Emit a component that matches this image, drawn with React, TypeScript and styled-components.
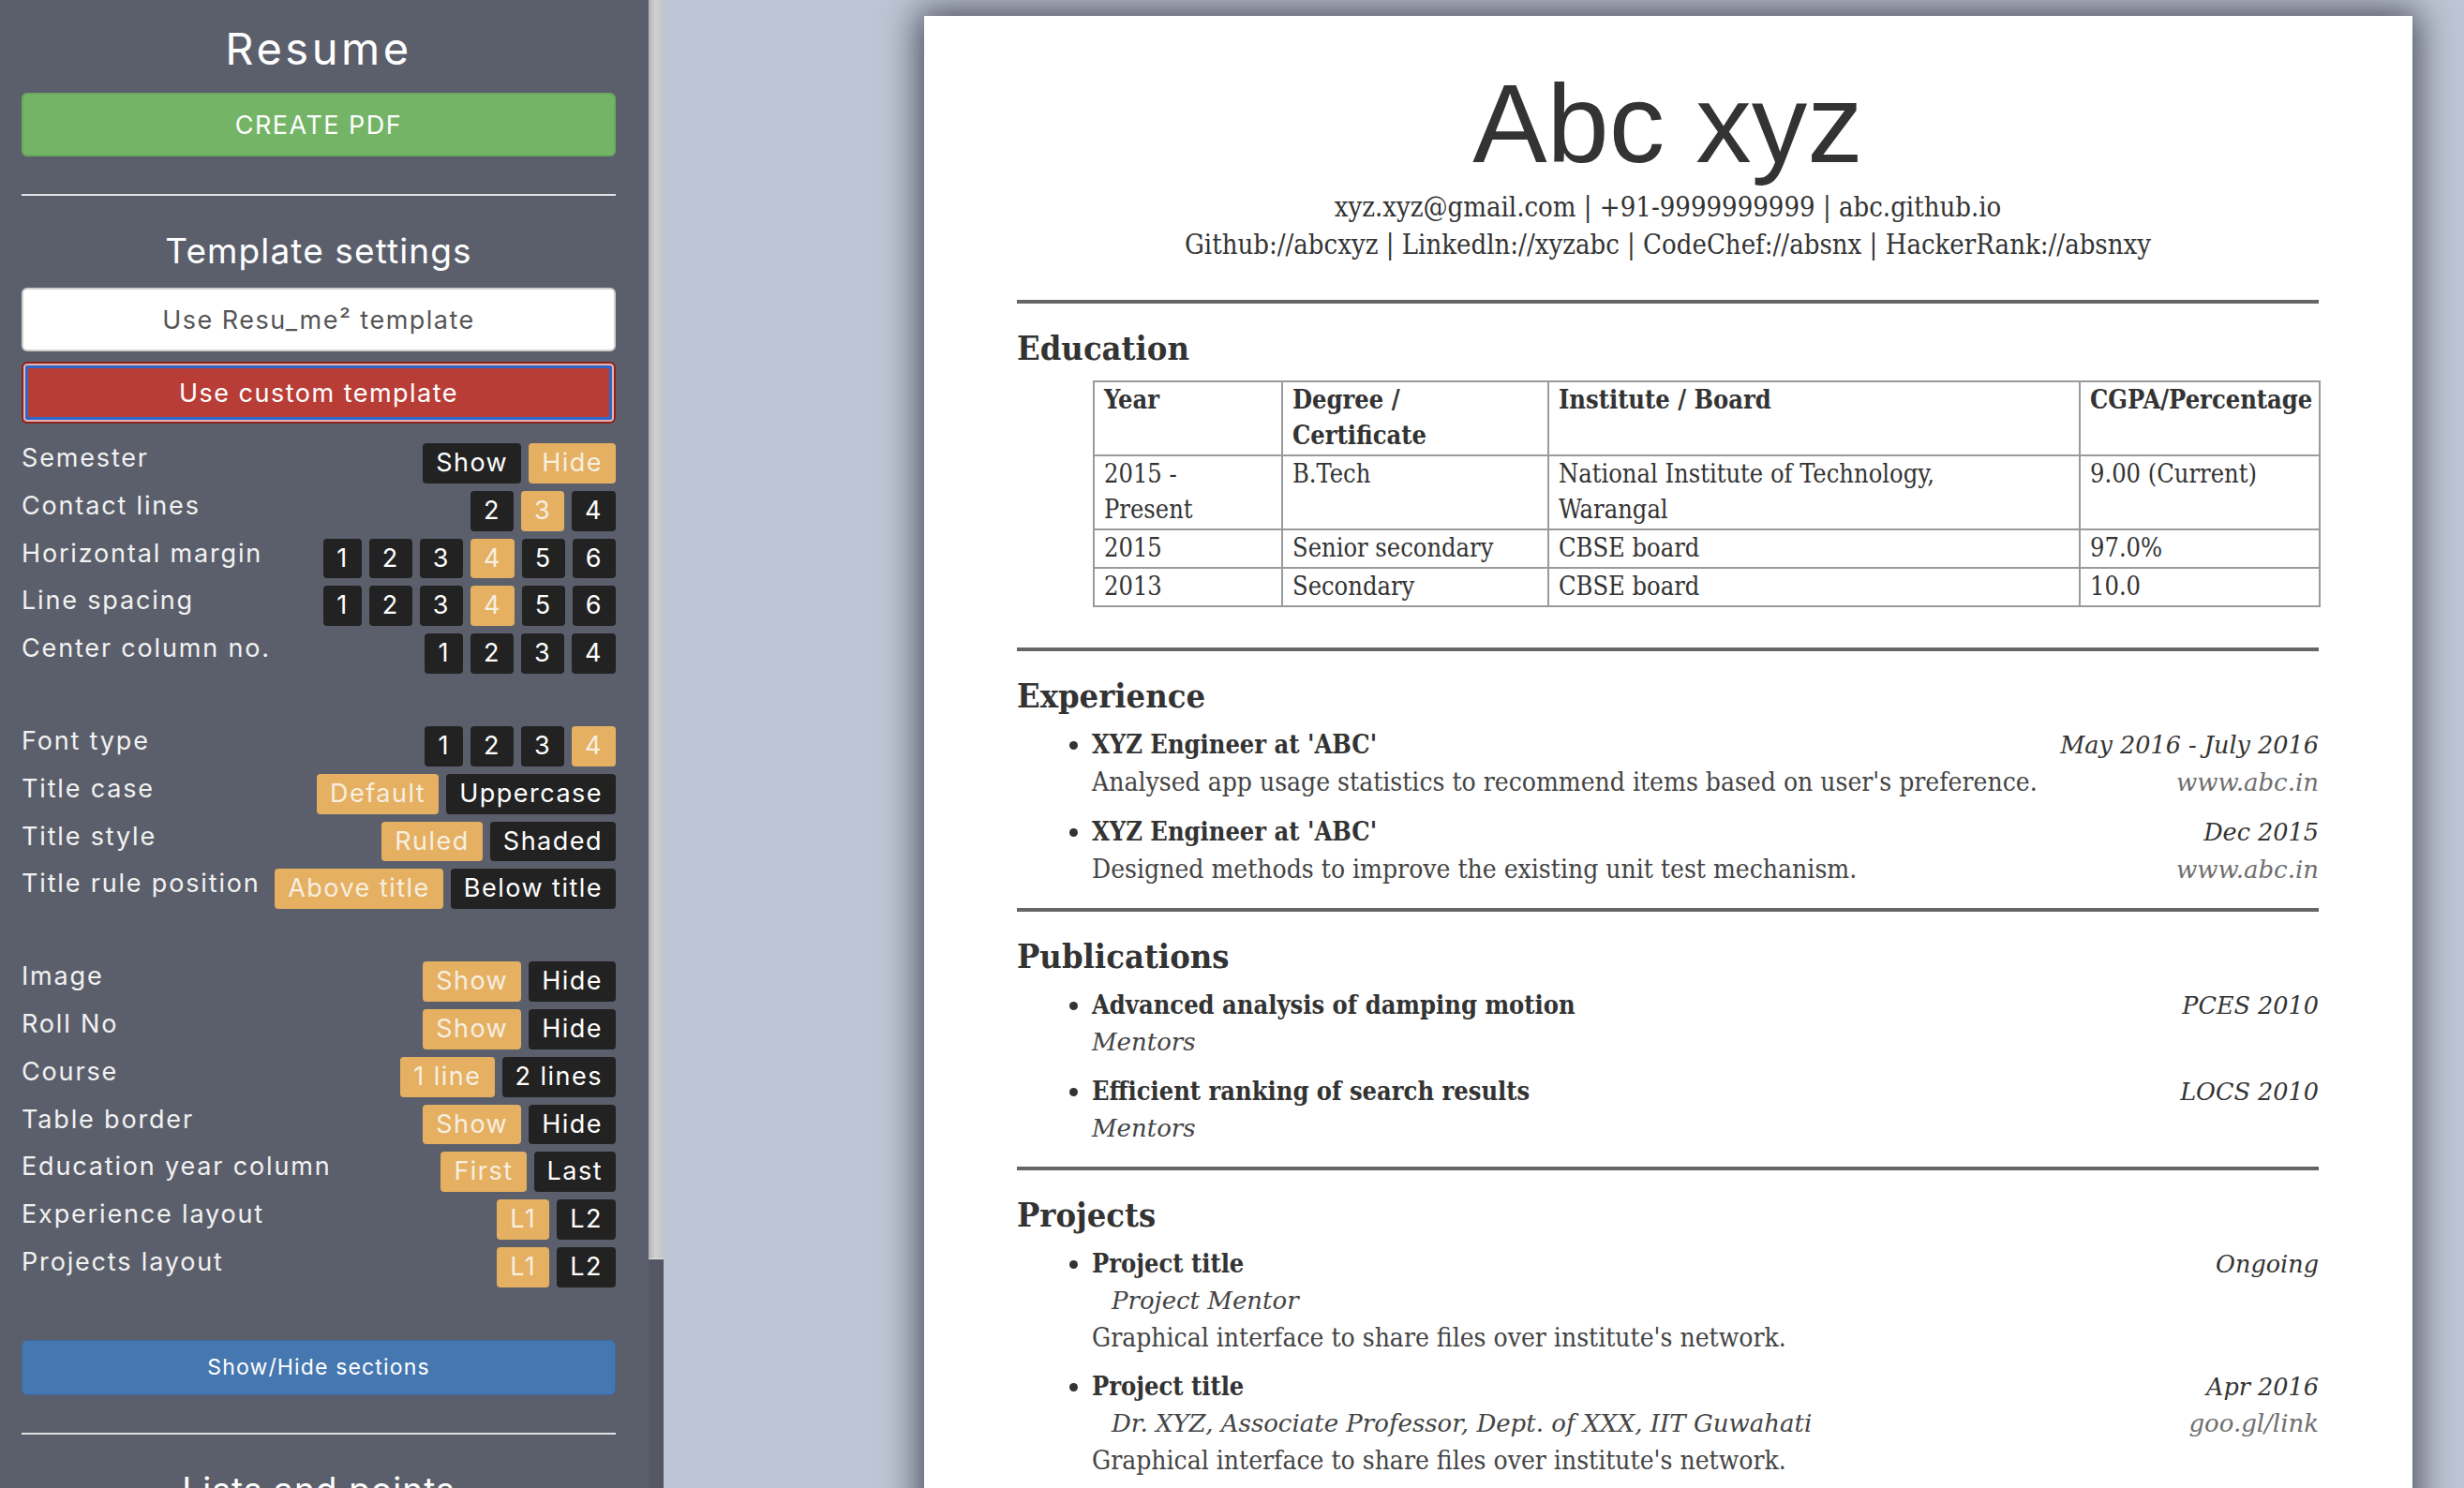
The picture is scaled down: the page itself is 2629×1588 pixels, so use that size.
import styled, { createGlobalStyle } from "styled-components";

const GlobalStyle = createGlobalStyle`
  html, body {
    margin: 0;
    height: 100%;
    overflow: hidden;
  }
  body {
    font-family: Inter, "Noto Sans", sans-serif;
  }
  #root {
    height: 100%;
  }
`;

type Setting = {
  name: string;
  options: string[];
  active: number;
};

const groups: Setting[][] = [
  [
    { name: "Semester", options: ["Show", "Hide"], active: 1 },
    { name: "Contact lines", options: ["2", "3", "4"], active: 1 },
    { name: "Horizontal margin", options: ["1", "2", "3", "4", "5", "6"], active: 3 },
    { name: "Line spacing", options: ["1", "2", "3", "4", "5", "6"], active: 3 },
    { name: "Center column no.", options: ["1", "2", "3", "4"], active: -1 },
  ],
  [
    { name: "Font type", options: ["1", "2", "3", "4"], active: 3 },
    { name: "Title case", options: ["Default", "Uppercase"], active: 0 },
    { name: "Title style", options: ["Ruled", "Shaded"], active: 0 },
    { name: "Title rule position", options: ["Above title", "Below title"], active: 0 },
  ],
  [
    { name: "Image", options: ["Show", "Hide"], active: 0 },
    { name: "Roll No", options: ["Show", "Hide"], active: 0 },
    { name: "Course", options: ["1 line", "2 lines"], active: 0 },
    { name: "Table border", options: ["Show", "Hide"], active: 0 },
    { name: "Education year column", options: ["First", "Last"], active: 0 },
    { name: "Experience layout", options: ["L1", "L2"], active: 0 },
    { name: "Projects layout", options: ["L1", "L2"], active: 0 },
  ],
];

const listSettings: Setting[] = [
  { name: "Bullet style", options: ["1", "2", "3"], active: 0 },
  { name: "List indent", options: ["1", "2", "3"], active: 1 },
];

// table cells are kept as the lines they break into on the page
const education = [
  { year: ["2015 -", "Present"], degree: ["B.Tech"], inst: ["National Institute of Technology,", "Warangal"], score: ["9.00 (Current)"] },
  { year: ["2015"], degree: ["Senior secondary"], inst: ["CBSE board"], score: ["97.0%"] },
  { year: ["2013"], degree: ["Secondary"], inst: ["CBSE board"], score: ["10.0"] },
];

const experience = [
  { title: "XYZ Engineer at 'ABC'", date: "May 2016 - July 2016", desc: "Analysed app usage statistics to recommend items based on user's preference.", link: "www.abc.in" },
  { title: "XYZ Engineer at 'ABC'", date: "Dec 2015", desc: "Designed methods to improve the existing unit test mechanism.", link: "www.abc.in" },
];

const publications = [
  { title: "Advanced analysis of damping motion", venue: "PCES 2010" },
  { title: "Efficient ranking of search results", venue: "LOCS 2010" },
];

const projects = [
  { title: "Project title", date: "Ongoing", mentor: "Project Mentor", link: "", desc: "Graphical interface to share files over institute's network." },
  { title: "Project title", date: "Apr 2016", mentor: "Dr. XYZ, Associate Professor, Dept. of XXX, IIT Guwahati", link: "goo.gl/link", desc: "Graphical interface to share files over institute's network." },
];

const Lines = ({ lines }: { lines: string[] }) => (
  <>
    {lines.map((l, i) => (
      <div key={i}>{l}</div>
    ))}
  </>
);

const SettingsRows = ({ items }: { items: Setting[] }) => (
  <Group>
    {items.map((s) => (
      <Row key={s.name}>
        <Label>{s.name}</Label>
        <Options>
          {s.options.map((o, i) => (
            <Option key={o} $active={i === s.active}>{o}</Option>
          ))}
        </Options>
      </Row>
    ))}
  </Group>
);

const App = () => {
  return (
    <Page>
      <GlobalStyle />
      <Sidebar>
        <SideInner>
          <AppTitle>Resume</AppTitle>
          <BigButton $kind="green">CREATE PDF</BigButton>
          <Rule />
          <SideHeading>Template settings</SideHeading>
          <BigButton $kind="white">Use Resu_me² template</BigButton>
          <BigButton $kind="red">Use custom template</BigButton>
          {groups.map((g, i) => (
            <SettingsRows key={i} items={g} />
          ))}
          <SectionsButton>Show/Hide sections</SectionsButton>
          <Rule />
          <SideHeading>Lists and points</SideHeading>
          <SettingsRows items={listSettings} />
        </SideInner>
        <ScrollTrack>
          <ScrollThumb />
        </ScrollTrack>
      </Sidebar>

      <Main>
        <Paper>
          <Name>Abc xyz</Name>
          <Contact>
            <div>xyz.xyz@gmail.com | +91-9999999999 | abc.github.io</div>
            <div>Github://abcxyz | Linkedln://xyzabc | CodeChef://absnx | HackerRank://absnxy</div>
          </Contact>

          <Section>
            <SectionTitle>Education</SectionTitle>
            <EduTable>
              <thead>
                <tr>
                  <Th $w={201}>Year</Th>
                  <Th $w={284}>
                    <Lines lines={["Degree /", "Certificate"]} />
                  </Th>
                  <Th $w={567}>Institute / Board</Th>
                  <Th $w={256}>CGPA/Percentage</Th>
                </tr>
              </thead>
              <tbody>
                {education.map((e, i) => (
                  <tr key={i}>
                    <Td><Lines lines={e.year} /></Td>
                    <Td><Lines lines={e.degree} /></Td>
                    <Td><Lines lines={e.inst} /></Td>
                    <Td><Lines lines={e.score} /></Td>
                  </tr>
                ))}
              </tbody>
            </EduTable>
          </Section>

          <Section>
            <SectionTitle>Experience</SectionTitle>
            <List>
              {experience.map((x, i) => (
                <Item key={i}>
                  <Line>
                    <Strong>{x.title}</Strong>
                    <Date>{x.date}</Date>
                  </Line>
                  <Line>
                    <Desc>{x.desc}</Desc>
                    <Link>{x.link}</Link>
                  </Line>
                </Item>
              ))}
            </List>
          </Section>

          <Section>
            <SectionTitle>Publications</SectionTitle>
            <List>
              {publications.map((p) => (
                <Item key={p.title}>
                  <Line>
                    <Strong>{p.title}</Strong>
                    <Date>{p.venue}</Date>
                  </Line>
                  <Line>
                    <Mentor>Mentors</Mentor>
                  </Line>
                </Item>
              ))}
            </List>
          </Section>

          <Section>
            <SectionTitle>Projects</SectionTitle>
            <List>
              {projects.map((p, i) => (
                <Item key={i}>
                  <Line>
                    <Strong>{p.title}</Strong>
                    <Date>{p.date}</Date>
                  </Line>
                  <Line>
                    <Mentor $indent>{p.mentor}</Mentor>
                    <Link>{p.link}</Link>
                  </Line>
                  <Line>
                    <Desc>{p.desc}</Desc>
                  </Line>
                </Item>
              ))}
            </List>
          </Section>
        </Paper>
      </Main>
    </Page>
  );
};

export default App;

const Page = styled.div`
  display: flex;
  height: 100%;
`;

const Sidebar = styled.aside`
  flex: none;
  display: flex;
  width: 708px;
  height: 100%;
  background: #5b5f6b;
  color: #fff;
  letter-spacing: 0.055em;
`;

const SideInner = styled.div`
  flex: 1;
  min-width: 0;
  overflow: hidden;
  display: flex;
  flex-direction: column;
  padding: 24px 35px 0 23px;
`;

const ScrollTrack = styled.div`
  flex: none;
  width: 16px;
  background: #545764;
`;

const ScrollThumb = styled.div`
  height: 1343px;
  background: linear-gradient(to right, #b3b3b6, #d0d0d2 45%, #c5c5c7);
  border-bottom: 1px solid #e6e6e8;
`;

const AppTitle = styled.h1`
  margin: 0;
  font-size: 47px;
  line-height: 56px;
  font-weight: 400;
  letter-spacing: 0.075em;
  text-align: center;
  color: #fff;
`;

const kinds = {
  green: { bg: "#74b467", border: "#6aa85d", color: "#fff", height: 68, mt: 19 },
  white: { bg: "#fff", border: "#cfcfcf", color: "#555", height: 68, mt: 17 },
  red: { bg: "#b93d37", border: "#8c231e", color: "#fff", height: 66, mt: 11 },
};

const BigButton = styled.button<{ $kind: keyof typeof kinds }>`
  flex: none;
  margin-top: ${(p) => kinds[p.$kind].mt}px;
  height: ${(p) => kinds[p.$kind].height}px;
  width: 100%;
  background: ${(p) => kinds[p.$kind].bg};
  color: ${(p) => kinds[p.$kind].color};
  border: 2px solid ${(p) => kinds[p.$kind].border};
  border-radius: 6px;
  font-family: inherit;
  font-size: 27px;
  font-weight: 400;
  letter-spacing: 0.055em;
  box-shadow: ${(p) =>
    p.$kind === "red" ? "inset 0 0 0 2px #e9b4b0, inset 0 0 0 5px #2f66c9" : "none"};
`;

const Rule = styled.hr`
  flex: none;
  margin: 40px 0 0;
  border: none;
  height: 2px;
  background: #e2e2e4;
`;

const SideHeading = styled.h2`
  flex: none;
  margin: 37px 0 0;
  font-size: 37px;
  line-height: 44px;
  font-weight: 400;
  letter-spacing: 0.03em;
  text-align: center;
  color: #fff;
`;

const Group = styled.div`
  flex: none;
  display: flex;
  flex-direction: column;
  gap: 8px;
  margin-top: 21px;

  & + & {
    margin-top: 56px;
  }
`;

const Row = styled.div`
  display: flex;
  justify-content: space-between;
  align-items: flex-start;
`;

const Label = styled.span`
  font-size: 27px;
  line-height: 31px;
  letter-spacing: 0.068em;
  color: #f2f2f2;
  white-space: nowrap;
`;

const Options = styled.div`
  display: flex;
  gap: 8px;
`;

const Option = styled.button<{ $active: boolean }>`
  height: 42.8px;
  padding: 0 14px;
  border: none;
  border-radius: 4px;
  background: ${(p) => (p.$active ? "#e5b062" : "#222222")};
  color: ${(p) => (p.$active ? "#f7efe0" : "#fff")};
  font-family: inherit;
  font-size: 27px;
  letter-spacing: 0.055em;
  line-height: 42.8px;
  white-space: nowrap;
`;

const SectionsButton = styled.button`
  flex: none;
  margin-top: 56px;
  height: 59px;
  width: 100%;
  background: #4577b1;
  border: 1px solid #3c6aa1;
  border-radius: 6px;
  color: #fff;
  font-family: inherit;
  font-size: 23px;
  letter-spacing: 0.05em;
`;

const Main = styled.main`
  flex: 1;
  height: 100%;
  overflow: hidden;
  background: #bec5d4;
  padding: 17px 0 0 278px;
  box-sizing: border-box;
`;

const Paper = styled.div`
  width: 1588px;
  min-height: 1700px;
  box-sizing: border-box;
  padding: 55px 100px 60px 99px;
  background: #fff;
  box-shadow: 0 0 36px 6px rgba(35, 38, 50, 0.75);
  color: #333;
  font-family: "DejaVu Serif", "Liberation Serif", serif;
  font-stretch: condensed;
  font-size: 28px;
`;

const Name = styled.h1`
  margin: 0;
  font-family: "Liberation Sans", Arial, sans-serif;
  font-stretch: normal;
  font-weight: 400;
  font-size: 119px;
  line-height: 119px;
  text-align: center;
  color: #333;
`;

const Contact = styled.div`
  margin: 10px 0 39px;
  text-align: center;
  line-height: 40px;
  font-size: 29px;
`;

const Section = styled.section`
  border-top: 4px solid #666;
  padding-top: 26px;
`;

const SectionTitle = styled.h2`
  margin: 0;
  font-size: 36px;
  line-height: 43px;
  font-weight: 700;
`;

const EduTable = styled.table`
  margin: 13px 0 43px 81px;
  width: 1308px;
  table-layout: fixed;
  border-collapse: collapse;
  font-size: 27px;
  line-height: 38px;
`;

const Th = styled.th<{ $w: number }>`
  box-sizing: border-box;
  width: ${(p) => p.$w}px;
  text-align: left;
  vertical-align: top;
  font-weight: 700;
  border: 2px solid #9a9a9a;
  padding: 0 8px 1px 10px;
  white-space: nowrap;
  overflow: hidden;
`;

const Td = styled.td`
  vertical-align: top;
  border: 2px solid #9a9a9a;
  padding: 0 8px 1px 10px;
  white-space: nowrap;
`;

const List = styled.ul`
  margin: 11px 0 21px;
  padding-left: 80px;
  list-style: disc;
  line-height: 39px;
`;

const Item = styled.li`
  & + & {
    margin-top: 13px;
  }
`;

const Line = styled.div`
  display: flex;
  justify-content: space-between;
  align-items: baseline;
`;

const Strong = styled.span`
  font-weight: 700;
  font-size: 27px;
  color: #333;
`;

const Date = styled.span`
  font-style: italic;
  font-stretch: normal;
  font-size: 25.5px;
  color: #333;
`;

const Desc = styled.span`
  color: #444;
`;

const Link = styled.span`
  font-style: italic;
  font-stretch: normal;
  font-size: 26px;
  color: #6f6f6f;
`;

const Mentor = styled.span<{ $indent?: boolean }>`
  font-style: italic;
  font-stretch: normal;
  font-size: 26px;
  color: #444;
  padding-left: ${(p) => (p.$indent ? "21px" : "0")};
`;
